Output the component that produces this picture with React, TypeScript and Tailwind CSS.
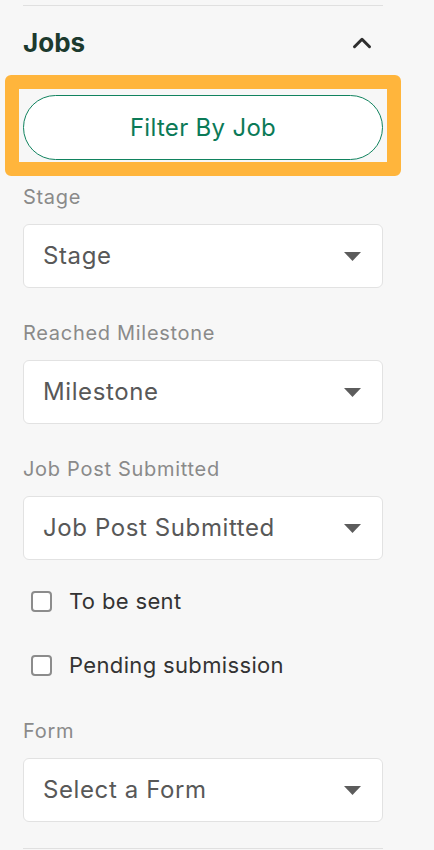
import { ChevronUp } from "lucide-react";

const font = { fontFamily: "Inter, 'Noto Sans', sans-serif" };

function Caret() {
  return (
    <svg width="17" height="9" viewBox="0 0 17 9" className="shrink-0">
      <path d="M0 0h17L8.5 9z" fill="#5c5c5c" />
    </svg>
  );
}

function SelectBox({ label, value }: { label: string; value: string }) {
  return (
    <div className="flex flex-col">
      <div className="text-[20px] leading-[24px] tracking-[0.7px] text-[#8a8a8a]">{label}</div>
      <div className="mt-[15px] h-[64px] rounded-[6px] border border-[#e2e2e2] bg-white pl-[19px] pr-[21px] flex items-center justify-between">
        <span className="text-[24px] leading-[30px] tracking-[0.6px] text-[#585858]">{value}</span>
        <Caret />
      </div>
    </div>
  );
}

function Check({ label }: { label: string }) {
  return (
    <label className="flex items-center h-[40px] pl-[8px]">
      <span className="w-[21px] h-[21px] rounded-[4px] border-2 border-[#8c8c8c] bg-white" />
      <span className="ml-[17px] text-[22px] leading-[28px] tracking-[0.35px] text-[#333333]">{label}</span>
    </label>
  );
}

export default function App() {
  return (
    <div className="min-h-[850px] w-[434px] bg-[#f7f7f7] pt-[5px]" style={font}>
      <div className="mx-[23px] w-[360px]">
        <div className="h-px bg-[#e0e0e0]" />

        <div className="mt-[21px] flex items-center justify-between">
          <h2 className="text-[26px] leading-[32px] font-bold text-[#1c3a2e]">Jobs</h2>
          <ChevronUp className="mr-[6px] w-[30px] h-[30px] text-[#2e2e2e]" strokeWidth={2.4} />
        </div>

        <div className="relative mt-[36px]">
          <button className="w-full h-[65px] rounded-full border border-[#11835f] bg-white text-[24px] tracking-[0.3px] text-[#0b7a57]">
            Filter By Job
          </button>
          <span className="pointer-events-none absolute -left-[18px] -right-[18px] -top-[20px] -bottom-[16px] rounded-[6px] border-[14px] border-[#ffb53c]" />
        </div>

        <div className="mt-[25px] flex flex-col gap-[33px]">
          <SelectBox label="Stage" value="Stage" />
          <SelectBox label="Reached Milestone" value="Milestone" />
          <SelectBox label="Job Post Submitted" value="Job Post Submitted" />
        </div>

        <div className="mt-[21px] flex flex-col gap-[24px]">
          <Check label="To be sent" />
          <Check label="Pending submission" />
        </div>

        <div className="mt-[34px]">
          <SelectBox label="Form" value="Select a Form" />
        </div>

        <div className="mt-[26px] h-px bg-[#e0e0e0]" />
      </div>
    </div>
  );
}
